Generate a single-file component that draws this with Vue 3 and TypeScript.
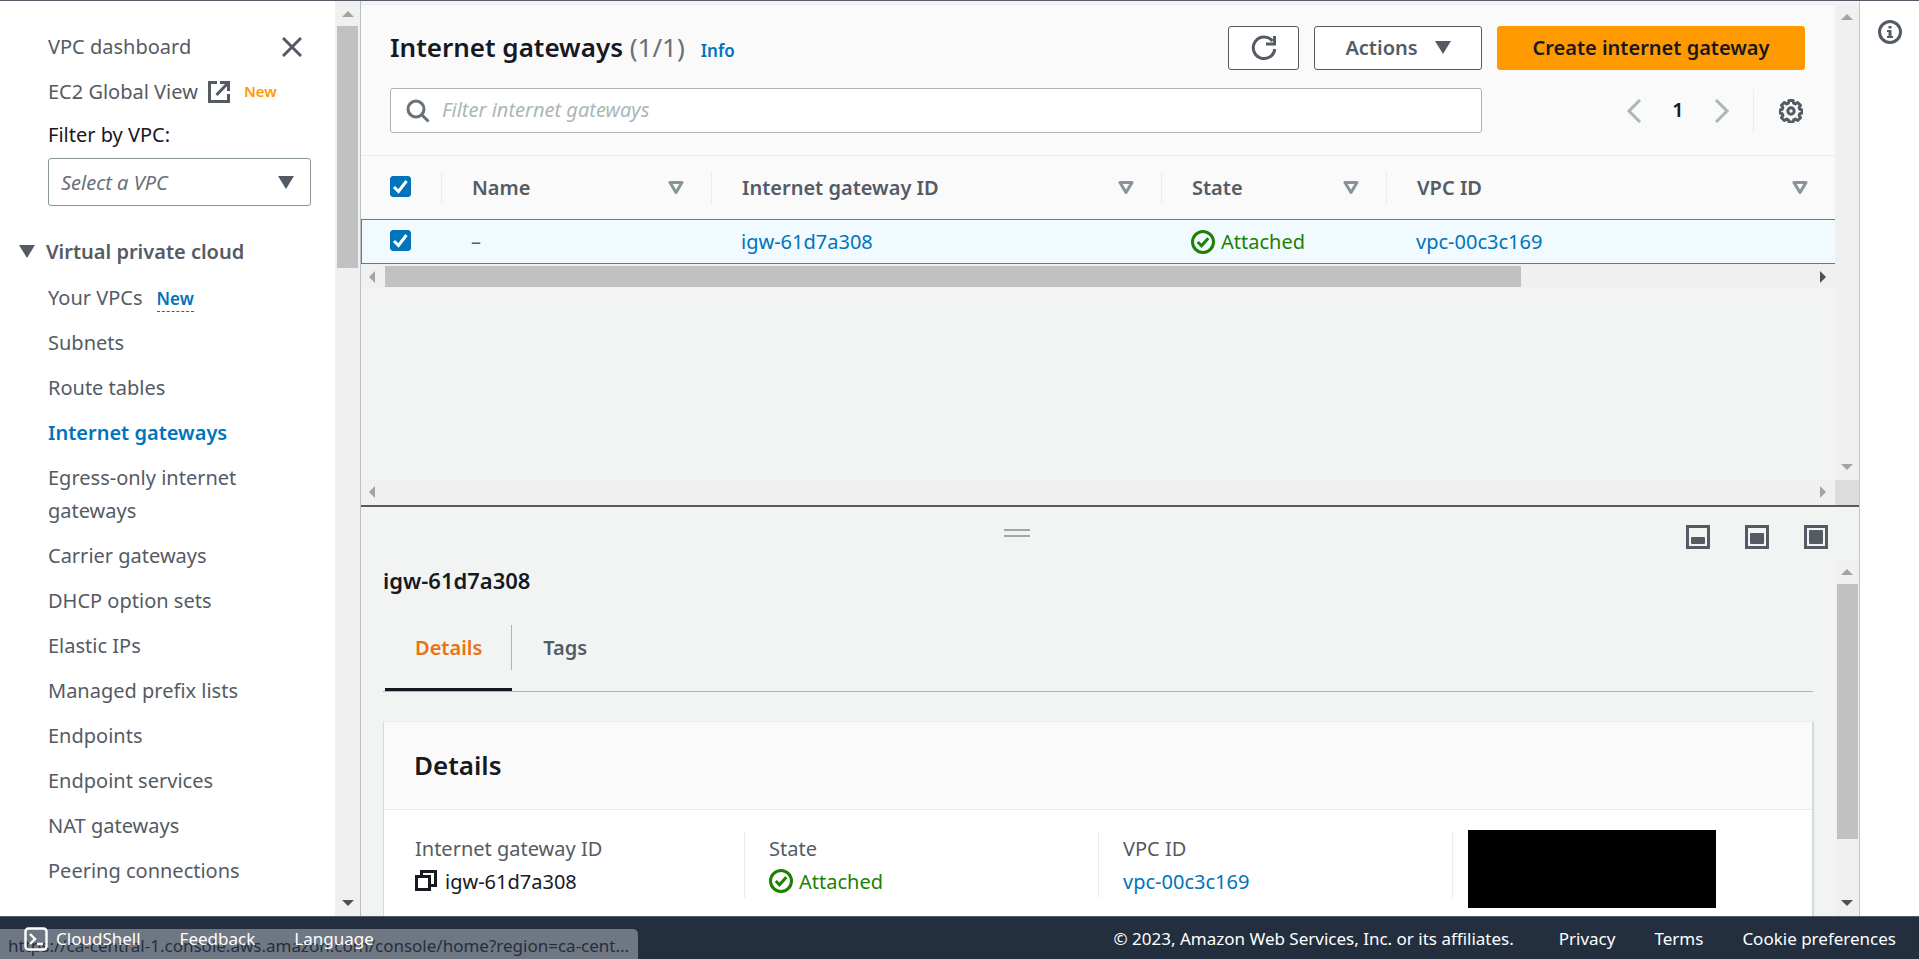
<script setup lang="ts">
import { ref } from 'vue'

interface NavItem {
  label: string
  isNew?: boolean
  active?: boolean
}

interface Column {
  key: string
  label: string
}

const navItems: NavItem[] = [
  { label: 'Your VPCs', isNew: true },
  { label: 'Subnets' },
  { label: 'Route tables' },
  { label: 'Internet gateways', active: true },
  { label: 'Egress-only internet gateways' },
  { label: 'Carrier gateways' },
  { label: 'DHCP option sets' },
  { label: 'Elastic IPs' },
  { label: 'Managed prefix lists' },
  { label: 'Endpoints' },
  { label: 'Endpoint services' },
  { label: 'NAT gateways' },
  { label: 'Peering connections' },
]

const columns: Column[] = [
  { key: 'name', label: 'Name' },
  { key: 'igw', label: 'Internet gateway ID' },
  { key: 'state', label: 'State' },
  { key: 'vpc', label: 'VPC ID' },
]

const allSelected = ref(true)
const rowSelected = ref(true)
const filter = ref('')
const vpc = ref('')
const statusUrl = 'https://ca-central-1.console.aws.amazon.com/console/home?region=ca-cent...'
</script>

<template>
  <div class="app">
    <svg class="defs" aria-hidden="true">
      <symbol id="i-down" viewBox="0 0 16 13"><path d="M0 0h16L8 13z" fill="currentColor" /></symbol>
      <symbol id="i-sort" viewBox="0 0 16 13"><path d="M2 1.500h12L8 11.500z" fill="none" stroke="currentColor" stroke-width="3" stroke-linejoin="round" /></symbol>
      <symbol id="i-tick" viewBox="0 0 21 21"><path d="M4 11l4.500 4.500L16.500 5" fill="none" stroke="#fff" stroke-width="3" /></symbol>
      <symbol id="i-ok" viewBox="0 0 16 16"><g fill="none" stroke="currentColor"><circle cx="8" cy="8" r="7" stroke-width="2" /><path d="M4.500 8l2.500 2.500 4.500-5" stroke-width="2" /></g></symbol>
      <symbol id="s-up" viewBox="0 0 12 6"><path d="M0 6L6 0l6 6z" fill="currentColor" /></symbol>
      <symbol id="s-down" viewBox="0 0 12 6"><path d="M0 0h12L6 6z" fill="currentColor" /></symbol>
      <symbol id="s-left" viewBox="0 0 6 12"><path d="M6 0v12L0 6z" fill="currentColor" /></symbol>
      <symbol id="s-right" viewBox="0 0 6 12"><path d="M0 0v12l6-6z" fill="currentColor" /></symbol>
    </svg>

    <div class="body">
      <nav class="sidebar" aria-label="VPC">
        <div class="nav-content">
          <div class="nav-line">
            <a href="#">VPC dashboard</a>
            <button class="plain close" type="button" aria-label="Close">
              <svg width="20" height="20" viewBox="0 0 20 20"><path d="M1 1l18 18M19 1L1 19" stroke="currentColor" stroke-width="3" /></svg>
            </button>
          </div>
          <div class="nav-line">
            <a class="external" href="#">
              EC2 Global View
              <svg width="22" height="22" viewBox="0 0 22 22"><path d="M9 1.500H1.500v19h19V13M12 1.500h8.500V10M20 2L8.500 14" fill="none" stroke="currentColor" stroke-width="3" /></svg>
            </a>
            <span class="new-tag">New</span>
          </div>
          <label class="filter-label" for="vpc-filter">Filter by VPC:</label>
          <div class="select-box">
            <select id="vpc-filter" v-model="vpc">
              <option value="">Select a VPC</option>
            </select>
            <svg class="caret" width="16" height="13"><use href="#i-down" width="16" height="13" /></svg>
          </div>
          <button class="plain section" type="button">
            <svg width="16" height="13"><use href="#i-down" width="16" height="13" /></svg>
            Virtual private cloud
          </button>
          <ul class="nav-list">
            <li v-for="item in navItems" :key="item.label">
              <a href="#" :class="{ active: item.active }">{{ item.label }}</a>
              <button v-if="item.isNew" class="plain new-link" type="button">New</button>
            </li>
          </ul>
        </div>
        <div class="vbar">
          <svg width="12" height="6"><use href="#s-up" /></svg>
          <div class="vtrack"><div class="thumb nav-thumb"></div></div>
          <svg class="dark" width="12" height="6"><use href="#s-down" /></svg>
        </div>
      </nav>

      <main class="main">
        <section class="list-pane">
          <div class="list-top">
            <div class="list-content">
              <header class="list-header">
                <div class="title-row">
                  <h1>Internet gateways <span class="count">(1/1)</span></h1>
                  <a class="info" href="#">Info</a>
                  <div class="actions">
                    <button class="btn refresh" type="button" aria-label="Refresh">
                      <svg width="26" height="26" viewBox="0 0 26 26"><path d="M21.500 6A10.800 10.800 0 1 0 23.800 14" fill="none" stroke="currentColor" stroke-width="3" /><path d="M23.500 1v8H15" fill="none" stroke="currentColor" stroke-width="3" /></svg>
                    </button>
                    <button class="btn menu" type="button">Actions
                      <svg width="16" height="13"><use href="#i-down" width="16" height="13" /></svg>
                    </button>
                    <button class="btn primary" type="button">Create internet gateway</button>
                  </div>
                </div>
                <div class="search-row">
                  <label class="search">
                    <svg width="24" height="24" viewBox="0 0 24 24"><g fill="none" stroke="#687078" stroke-width="3"><circle cx="10" cy="10" r="8" /><path d="M15.500 15.500l7 7" /></g></svg>
                    <input v-model="filter" type="text" placeholder="Filter internet gateways" aria-label="Filter internet gateways" />
                  </label>
                  <div class="pager">
                    <button class="plain arrow" type="button" aria-label="Previous page">
                      <svg width="16" height="24" viewBox="0 0 16 24"><path d="M14 1L3 12l11 11" fill="none" stroke="currentColor" stroke-width="3" /></svg>
                    </button>
                    <button class="plain page" type="button">1</button>
                    <button class="plain arrow" type="button" aria-label="Next page">
                      <svg width="16" height="24" viewBox="0 0 16 24"><path d="M2 1l11 11L2 23" fill="none" stroke="currentColor" stroke-width="3" /></svg>
                    </button>
                    <span class="rule"></span>
                    <button class="plain" type="button" aria-label="Preferences">
                      <svg width="24" height="24" viewBox="0 0 24 24"><g fill="none" stroke="currentColor" stroke-linejoin="round"><path stroke-width="3" d="M10 1.500h4l.6 2.600 1.800.8 2.300-1.400 2.800 2.800-1.400 2.300.8 1.800 2.100.6v3l-2.100.6-.8 1.800 1.400 2.300-2.800 2.800-2.300-1.400-1.800.8-.6 2.100h-4l-.6-2.100-1.800-.8-2.300 1.400-2.800-2.800 1.400-2.300-.8-1.800-2.100-.6v-3l2.100-.6.8-1.800-1.400-2.300 2.800-2.800 2.300 1.400 1.800-.8z" /><circle cx="12" cy="12" r="3.200" stroke-width="3" /></g></svg>
                    </button>
                  </div>
                </div>
              </header>

              <table class="grid">
                <colgroup><col class="c-check" /><col class="c-name" /><col class="c-igw" /><col class="c-state" /><col /></colgroup>
                <thead>
                  <tr>
                    <th class="check-cell">
                      <span class="check"><input v-model="allSelected" type="checkbox" aria-label="Select all" /><svg v-if="allSelected" width="21" height="21"><use href="#i-tick" /></svg></span>
                    </th>
                    <th v-for="c in columns" :key="c.key" scope="col">
                      <button class="plain th-inner" type="button">{{ c.label }}<svg width="16" height="13"><use href="#i-sort" width="16" height="13" /></svg></button>
                    </th>
                  </tr>
                </thead>
                <tbody>
                  <tr>
                    <td class="check-cell">
                      <span class="check"><input v-model="rowSelected" type="checkbox" aria-label="Select igw-61d7a308" /><svg v-if="rowSelected" width="21" height="21"><use href="#i-tick" /></svg></span>
                    </td>
                    <td>–</td>
                    <td><a href="#">igw-61d7a308</a></td>
                    <td><span class="state"><svg width="24" height="24"><use href="#i-ok" /></svg>Attached</span></td>
                    <td><a href="#">vpc-00c3c169</a></td>
                  </tr>
                </tbody>
              </table>
              <div class="hbar">
                <svg width="6" height="12"><use href="#s-left" /></svg>
                <div class="htrack"><div class="hthumb"></div></div>
                <svg class="dark" width="6" height="12"><use href="#s-right" /></svg>
              </div>
            </div>
            <div class="vbar narrow">
              <svg width="12" height="6"><use href="#s-up" /></svg>
              <div class="vtrack"></div>
              <svg width="12" height="6"><use href="#s-down" /></svg>
            </div>
          </div>
          <div class="list-bottom">
            <div class="hbar">
              <svg width="6" height="12"><use href="#s-left" /></svg>
              <div class="htrack"></div>
              <svg width="6" height="12"><use href="#s-right" /></svg>
            </div>
            <div class="corner"></div>
          </div>
        </section>

        <section class="detail-pane">
          <div class="split-bar">
            <div class="handle-area"><div class="handle"></div></div>
            <div class="sizes">
              <button class="plain" type="button" aria-label="Small panel"><svg width="24" height="24" viewBox="0 0 24 24"><rect x="1.500" y="1.500" width="21" height="21" fill="none" stroke="currentColor" stroke-width="3" /><rect x="5" y="12" width="14" height="7" rx="1" fill="currentColor" /></svg></button>
              <button class="plain" type="button" aria-label="Medium panel"><svg width="24" height="24" viewBox="0 0 24 24"><rect x="1.500" y="1.500" width="21" height="21" fill="none" stroke="currentColor" stroke-width="3" /><rect x="5" y="8" width="14" height="11" rx="1" fill="currentColor" /></svg></button>
              <button class="plain" type="button" aria-label="Large panel"><svg width="24" height="24" viewBox="0 0 24 24"><rect x="1.500" y="1.500" width="21" height="21" fill="none" stroke="currentColor" stroke-width="3" /><rect x="5" y="5" width="14" height="14" rx="1" fill="currentColor" /></svg></button>
            </div>
          </div>
          <div class="detail-row">
            <div class="detail-content">
              <h2>igw-61d7a308</h2>
              <div class="tabs" role="tablist">
                <button class="plain tab active" type="button" role="tab" aria-selected="true">Details</button>
                <button class="plain tab" type="button" role="tab" aria-selected="false">Tags</button>
              </div>
              <article class="card">
                <h3>Details</h3>
                <dl>
                  <div>
                    <dt>Internet gateway ID</dt>
                    <dd>
                      <button class="plain copy" type="button" aria-label="Copy ID"><svg width="22" height="22" viewBox="0 0 22 22"><path d="M1.500 6.500h13v13h-13zM6.500 6V1.500h14v14H15.500" fill="none" stroke="currentColor" stroke-width="3" /></svg></button>
                      igw-61d7a308
                    </dd>
                  </div>
                  <div>
                    <dt>State</dt>
                    <dd><span class="state"><svg width="24" height="24"><use href="#i-ok" /></svg>Attached</span></dd>
                  </div>
                  <div>
                    <dt>VPC ID</dt>
                    <dd><a href="#">vpc-00c3c169</a></dd>
                  </div>
                  <div class="masked"><span></span></div>
                </dl>
              </article>
            </div>
            <div class="vbar narrow">
              <svg width="12" height="6"><use href="#s-up" /></svg>
              <div class="vtrack"><div class="thumb detail-thumb"></div></div>
              <svg class="dark" width="12" height="6"><use href="#s-down" /></svg>
            </div>
          </div>
        </section>
      </main>

      <aside class="help">
        <button class="plain" type="button" aria-label="Info">
          <svg width="24" height="24" viewBox="0 0 24 24"><circle cx="12" cy="12" r="10.500" fill="none" stroke="currentColor" stroke-width="3" /><path d="M10.500 6h3v2.500h-3zM9 10h4.500v6H15v2H9v-2h1.500v-4H9z" fill="currentColor" /></svg>
        </button>
      </aside>
    </div>

    <footer class="footer">
      <div class="status">{{ statusUrl }}</div>
      <a class="shell" href="#">
        <svg width="24" height="24" viewBox="0 0 24 24"><rect x="1.500" y="1.500" width="21" height="21" rx="3" fill="none" stroke="#fff" stroke-width="2.400" /><path d="M6 7l5 5-5 5M13 17h6" fill="none" stroke="#fff" stroke-width="2.400" /></svg>
        CloudShell
      </a>
      <a href="#">Feedback</a>
      <a href="#">Language</a>
      <span class="copyright">© 2023, Amazon Web Services, Inc. or its affiliates.</span>
      <a href="#">Privacy</a>
      <a href="#">Terms</a>
      <a href="#">Cookie preferences</a>
    </footer>
  </div>
</template>

<style>
body {
  margin: 0;
  background: #fff;
}
</style>

<style scoped>
* {
  box-sizing: border-box;
}
.app {
  display: flex;
  flex-direction: column;
  height: 100vh;
  overflow: hidden;
  font-family: "Noto Sans", "Open Sans", sans-serif;
  font-size: 20px;
  line-height: 33px;
  color: #16191f;
}
.defs {
  position: absolute;
  width: 0;
  height: 0;
}
svg {
  display: block;
  flex: none;
}
a {
  color: #0073bb;
  text-decoration: none;
}
.plain {
  display: inline-flex;
  align-items: center;
  justify-content: center;
  padding: 0;
  border: 0;
  background: none;
  font: inherit;
  color: #545b64;
}
.body {
  flex: 1;
  min-height: 0;
  display: grid;
  grid-template-columns: 360px minmax(0, 1fr) 60px;
  grid-template-rows: minmax(0, 1fr);
  border-top: 1px solid #545b64;
}

/* scrollbars */
.vbar {
  flex: none;
  width: 25px;
  padding: 10px 0;
  display: flex;
  flex-direction: column;
  align-items: center;
  gap: 9px;
  background: #f0f0f0;
  color: #a3a3a3;
}
.vbar.narrow {
  width: 24px;
}
.vtrack {
  flex: 1;
  min-height: 0;
}
.thumb {
  width: 21px;
  background: #c1c1c1;
}
.nav-thumb {
  height: 28%;
}
.detail-thumb {
  height: 83%;
}
.dark {
  color: #505050;
}
.hbar {
  flex: 1;
  height: 25px;
  padding: 0 9px 0 8px;
  display: flex;
  align-items: center;
  gap: 10px;
  background: #f0f0f0;
  color: #a3a3a3;
}
.htrack {
  flex: 1;
}
.hthumb {
  width: calc(80% - 4px);
  height: 21px;
  background: #c1c1c1;
}

/* sidebar */
.sidebar {
  display: flex;
  min-height: 0;
  overflow: hidden;
}
.nav-content {
  flex: 1;
  min-width: 0;
  padding: 29px 24px 0 48px;
  color: #545b64;
}
.nav-content a {
  color: #545b64;
}
.nav-line {
  display: flex;
  align-items: center;
  margin-bottom: 12px;
}
.nav-line + .nav-line {
  margin-bottom: 10px;
}
.close {
  margin-left: auto;
  margin-right: 9px;
}
.external {
  display: flex;
  align-items: center;
  gap: 10px;
}
.new-tag {
  margin-left: 14px;
  font-size: 15px;
  font-weight: 600;
  color: #ff9900;
}
.filter-label {
  display: block;
  margin-bottom: 7px;
  color: #16191f;
}
.select-box {
  display: grid;
  align-items: center;
  margin-bottom: 28px;
}
.select-box > * {
  grid-area: 1 / 1;
}
.select-box select {
  appearance: none;
  width: 100%;
  height: 48px;
  padding: 0 12px;
  border: 1px solid #879596;
  border-radius: 3px;
  background: #fff;
  font: inherit;
  font-style: italic;
  color: #687078;
}
.caret {
  justify-self: end;
  margin-right: 17px;
  pointer-events: none;
}
.section {
  margin: 0 0 13px -29px;
  gap: 11px;
  font-weight: 600;
}
.nav-list {
  margin: 0;
  padding: 0;
  list-style: none;
  display: flex;
  flex-direction: column;
  gap: 12px;
}
.nav-list .active {
  color: #0073bb;
  font-weight: 600;
}
.new-link {
  margin-left: 14px;
  height: 26px;
  border-bottom: 1px dashed #0073bb;
  font-size: 17px;
  font-weight: 600;
  color: #0073bb;
}

/* list pane */
.main {
  display: flex;
  flex-direction: column;
  min-width: 0;
  min-height: 0;
  border-left: 1px solid #b8c0c1;
  background: #f2f4f4;
}
.list-pane {
  flex: 505 1 0;
  min-height: 0;
  display: flex;
  flex-direction: column;
}
.list-top {
  flex: 1;
  min-height: 0;
  display: flex;
  border-top: 3px solid #f3f3f7;
}
.list-content {
  flex: 1;
  min-width: 0;
}
.list-header {
  padding: 21px 30px 22px 29px;
  border-top: 1px solid #eaeded;
  border-bottom: 1px solid #eaeded;
  background: #fafafa;
}
.title-row,
.actions,
.search-row,
.pager {
  display: flex;
  align-items: center;
}
h1,
h3 {
  margin: 0;
  font-size: 26px;
  font-weight: 600;
}
h1 {
  padding-bottom: 2px;
}
.count {
  font-weight: 400;
  color: #687078;
}
.info {
  margin: 4px 0 0 16px;
  font-size: 17px;
  font-weight: 600;
}
.actions {
  margin-left: auto;
  gap: 15px;
}
.btn {
  display: flex;
  align-items: center;
  justify-content: center;
  height: 44px;
  padding: 0 0 2px;
  border: 1px solid #545b64;
  border-radius: 3px;
  background: #fff;
  font: inherit;
  font-weight: 600;
  color: #545b64;
}
.refresh {
  width: 71px;
  padding: 0;
}
.menu {
  width: 168px;
  gap: 17px;
}
.primary {
  width: 308px;
  border-color: #ff9900;
  background: #ff9900;
  color: #16191f;
}
.search-row {
  margin-top: 18px;
}
.search {
  flex: 1;
  display: flex;
  align-items: center;
  gap: 12px;
  height: 45px;
  padding: 0 15px;
  border: 1px solid #aab7b8;
  border-radius: 3px;
  background: #fff;
}
.search input {
  flex: 1;
  min-width: 0;
  padding: 0 0 2px;
  border: 0;
  outline: 0;
  background: none;
  font: inherit;
  color: #16191f;
}
.search input::placeholder {
  font-style: italic;
  color: #aab7b8;
}
.pager {
  flex: 0 0 323px;
  justify-content: flex-end;
  padding-right: 2px;
}
.arrow {
  color: #aab7b8;
}
.page {
  width: 72px;
  padding-bottom: 2px;
  font-weight: 600;
  color: #16191f;
}
.rule {
  width: 1px;
  height: 44px;
  margin: 0 25px 0 23px;
  background: #eaeded;
}
.grid {
  width: 100%;
  table-layout: fixed;
  border-spacing: 0;
  text-align: left;
}
.c-check {
  width: 80px;
}
.c-name {
  width: 270px;
}
.c-igw {
  width: 450px;
}
.c-state {
  width: 225px;
}
th,
td {
  padding: 0;
}
th {
  height: 63px;
  background: #fafafa;
}
.th-inner {
  width: 100%;
  height: 32px;
  padding: 0 27px 2px 30px;
  justify-content: space-between;
  border-left: 1px solid #eaeded;
  font-weight: 600;
}
.th-inner svg {
  color: #879596;
}
td {
  height: 45px;
  padding-left: 30px;
  border-top: 1px solid #00a1c9;
  border-bottom: 1px solid #00a1c9;
  background: #f1faff;
  color: #545b64;
}
.check-cell {
  padding: 0 0 6px 29px;
}
td.check-cell {
  border-left: 1px solid #00a1c9;
  padding-left: 28px;
}
.check {
  display: inline-grid;
  vertical-align: middle;
}
.check > * {
  grid-area: 1 / 1;
}
.check input {
  appearance: none;
  width: 21px;
  height: 21px;
  margin: 0;
  border: 1px solid #0073bb;
  border-radius: 3px;
}
.check input:checked {
  background: #0073bb;
}
.check svg {
  pointer-events: none;
}
.state {
  display: flex;
  align-items: center;
  gap: 6px;
  color: #1d8102;
}
.list-bottom {
  display: flex;
}
.corner {
  width: 24px;
  background: #dcdcdc;
}

/* detail pane */
.detail-pane {
  flex: 410 1 0;
  min-height: 0;
  display: flex;
  flex-direction: column;
  border-top: 2px solid #545b64;
}
.split-bar {
  flex: none;
  height: 52px;
  display: flex;
  align-items: flex-start;
  padding: 18px 31px 0 0;
}
.sizes {
  display: flex;
  gap: 35px;
}
.handle-area {
  flex: 1;
  padding-right: 13px;
}
.handle {
  width: 26px;
  height: 8px;
  margin: 4px auto 0;
  border-top: 2px solid #a3a6a6;
  border-bottom: 2px solid #a3a6a6;
}
.detail-row {
  flex: 1;
  min-height: 0;
  display: flex;
}
.detail-content {
  flex: 1;
  min-width: 0;
  padding: 5px 22px 0;
  overflow: hidden;
}
h2 {
  margin: 0;
  font-size: 22px;
  font-weight: 600;
}
.tabs {
  display: flex;
  margin-top: 28px;
  padding-left: 2px;
  border-bottom: 1px solid #aab7b8;
}
.tab {
  height: 66px;
  padding: 0 31px 20px;
  font-weight: 600;
}
.tab.active {
  position: relative;
  padding: 0 30px 17px;
  border-bottom: 3px solid #16191f;
  color: #ec7211;
}
.tab.active::after {
  content: "";
  position: absolute;
  top: 0;
  right: 0;
  height: 45px;
  border-right: 1px solid #aab7b8;
}
.card {
  margin-top: 29px;
  border: 1px solid #d5dbdb;
  border-top-color: #eaeded;
  box-shadow: 1px 1px 1px #d5dbdb;
  background: #fff;
}
h3 {
  padding: 27px 30px;
  border-bottom: 1px solid #eaeded;
  background: #fafafa;
}
dl {
  display: grid;
  grid-template-columns: repeat(4, minmax(0, 1fr));
  margin: 0;
  padding: 22px 6px 30px;
}
dl > div {
  height: 66px;
  padding-left: 24px;
  border-left: 1px solid #eaeded;
}
dl > div:first-child {
  border-left-color: transparent;
}
dt {
  color: #545b64;
}
dd {
  display: flex;
  align-items: center;
  gap: 8px;
  margin: 0;
}
.copy {
  color: #16191f;
}
dl > .masked {
  padding-left: 15px;
}
.masked span {
  display: block;
  width: 248px;
  height: 78px;
  margin-top: -2px;
  background: #000;
}

/* right rail and footer */
.help {
  border-left: 1px solid #c3c7c9;
  padding: 19px 0 0 18px;
  background: #fff;
}
.footer {
  position: relative;
  z-index: 0;
  flex: none;
  display: flex;
  align-items: center;
  gap: 39px;
  height: 43px;
  padding: 1px 23px 0 24px;
  border-top: 1px solid #545b64;
  background: #232f3e;
  font-size: 17px;
  color: #fff;
}
.footer a {
  color: #fff;
}
.shell {
  display: flex;
  align-items: center;
  gap: 8px;
}
.copyright {
  margin-left: auto;
  margin-right: 6px;
}
.status {
  position: absolute;
  z-index: -1;
  left: 0;
  bottom: 0;
  width: 638px;
  height: 30px;
  padding: 0 8px;
  border-top-right-radius: 5px;
  background: #6f7782;
  line-height: 33px;
  color: #232f3e;
  white-space: nowrap;
  overflow: hidden;
}
</style>
